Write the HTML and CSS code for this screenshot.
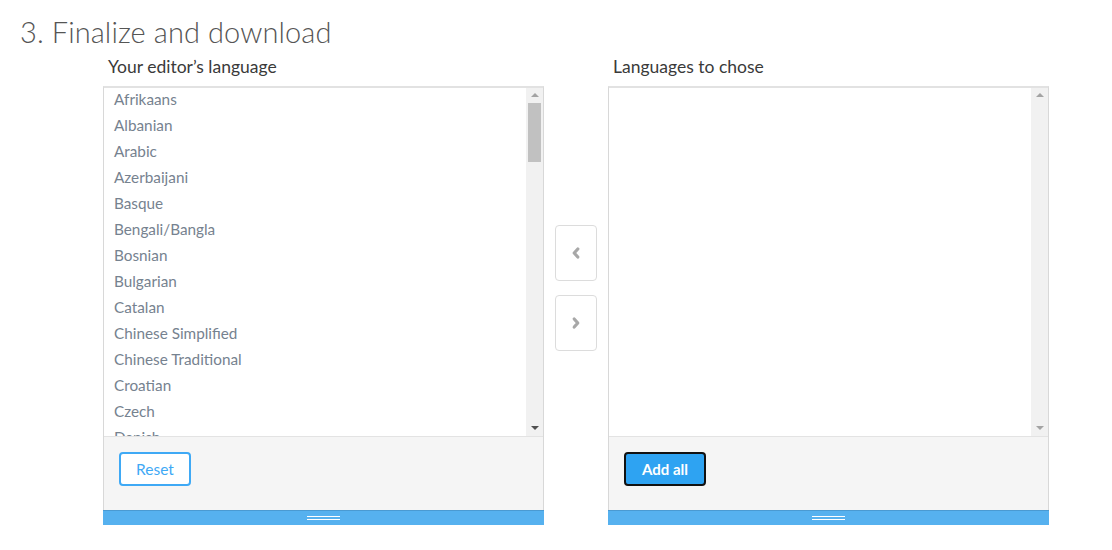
FILE: index.html
```html
<!DOCTYPE html>
<html>
<head>
<meta charset="utf-8">
<link rel="stylesheet" href="styles.css">
</head>
<body>
<h1 class="title">3. Finalize and download</h1>
<div class="row">
  <div class="panel">
    <div class="label">Your editor’s language</div>
    <div class="box">
      <div class="listwrap">
        <ul class="list">
          <li>Afrikaans</li>
          <li>Albanian</li>
          <li>Arabic</li>
          <li>Azerbaijani</li>
          <li>Basque</li>
          <li>Bengali/Bangla</li>
          <li>Bosnian</li>
          <li>Bulgarian</li>
          <li>Catalan</li>
          <li>Chinese Simplified</li>
          <li>Chinese Traditional</li>
          <li>Croatian</li>
          <li>Czech</li>
          <li>Danish</li>
        </ul>
        <div class="sbar">
          <span class="arr up light"></span>
          <span class="thumb"></span>
          <span class="fill"></span>
          <span class="arr down dark"></span>
        </div>
      </div>
      <div class="foot">
        <button class="btn reset">Reset</button>
      </div>
      <div class="grip"><span></span></div>
    </div>
  </div>
  <div class="mid">
    <button class="nav"><svg width="10" height="14" viewBox="0 0 10 14"><path d="M6.8 3 L3.2 7 L6.8 11" fill="none" stroke="#a8a8a8" stroke-width="3.2" stroke-linecap="round" stroke-linejoin="round"/></svg></button>
    <button class="nav"><svg width="10" height="14" viewBox="0 0 10 14"><path d="M3.2 3 L6.8 7 L3.2 11" fill="none" stroke="#a8a8a8" stroke-width="3.2" stroke-linecap="round" stroke-linejoin="round"/></svg></button>
  </div>
  <div class="panel">
    <div class="label">Languages to chose</div>
    <div class="box">
      <div class="listwrap">
        <ul class="list"></ul>
        <div class="sbar">
          <span class="arr up light"></span>
          <span class="fill"></span>
          <span class="arr down light"></span>
        </div>
      </div>
      <div class="foot">
        <button class="btn addall">Add all</button>
      </div>
      <div class="grip"><span></span></div>
    </div>
  </div>
</div>
</body>
</html>
```
FILE: styles.css
```css
html, body {
  margin: 0;
  padding: 0;
  background: #fff;
  font-family: "Lato", "Open Sans", sans-serif;
}
.title {
  margin: 0;
  padding: 14px 0 0 20px;
  height: 40px;
  font-size: 29px;
  font-weight: 300;
  color: #555;
  line-height: 36px;
  letter-spacing: 0.1px;
}
.row {
  display: flex;
  gap: 11px;
  padding-left: 103px;
  margin-top: 0;
}
.panel {
  width: 441px;
  display: flex;
  flex-direction: column;
}
.label {
  height: 32px;
  line-height: 26px;
  padding-left: 5px;
  font-size: 17.5px;
  color: #3a3a3a;
}
.box {
  border-left: 1px solid #d8d8d8;
  border-right: 1px solid #d8d8d8;
  border-top: 2px solid #e2e2e2;
  display: flex;
  flex-direction: column;
}
.listwrap {
  height: 348px;
  display: flex;
  border-bottom: 1px solid #e3e3e3;
}
.list {
  flex: 1;
  margin: 0;
  padding: 0 0 0 10px;
  list-style: none;
  overflow: hidden;
}
.list li {
  height: 26px;
  line-height: 22px;
  font-size: 15.3px;
  color: #76828f;
}
.sbar {
  width: 17px;
  background: #f1f1f1;
  display: flex;
  flex-direction: column;
  align-items: center;
}
.arr {
  width: 0;
  height: 0;
  border-left: 4px solid transparent;
  border-right: 4px solid transparent;
}
.arr.up {
  margin-top: 5px;
  margin-bottom: 6px;
  border-bottom: 4px solid #a3a3a3;
}
.arr.down {
  margin-top: 5px;
  margin-bottom: 6px;
  border-top: 4px solid #a3a3a3;
}
.arr.down.dark { border-top-color: #505050; }
.thumb {
  width: 13px;
  height: 59px;
  background: #c1c1c1;
}
.fill { flex: 1; }
.foot {
  height: 73px;
  background: #f5f5f5;
  padding: 15px 0 0 15px;
  box-sizing: border-box;
}
.btn {
  height: 34px;
  border-radius: 4px;
  font-family: "Lato", "Open Sans", sans-serif;
  font-size: 15.5px;
  box-sizing: border-box;
  cursor: pointer;
  padding: 0;
}
.reset {
  width: 72px;
  background: #fff;
  border: 2px solid #3fa9f5;
  color: #3fa9f5;
}
.addall {
  width: 82px;
  background: #2ea3f2;
  border: 2px solid #111;
  color: #fff;
  font-weight: 700;
  font-size: 15px;
}
.grip {
  height: 15px;
  margin: 0 -1px;
  background: #56b1ef;
  border-top: 1px solid #4a9ad2;
  box-sizing: border-box;
  display: flex;
  justify-content: center;
  align-items: center;
}
.grip span {
  width: 33px;
  height: 2px;
  border-top: 1px solid #fff;
  border-bottom: 1px solid #fff;
}
.mid {
  width: 42px;
  padding-top: 171px;
  display: flex;
  flex-direction: column;
  gap: 14px;
}
.nav {
  width: 42px;
  height: 56px;
  background: #fff;
  border: 1px solid #dcdcdc;
  border-radius: 4px;
  padding: 0;
  display: flex;
  align-items: center;
  justify-content: center;
}
```
